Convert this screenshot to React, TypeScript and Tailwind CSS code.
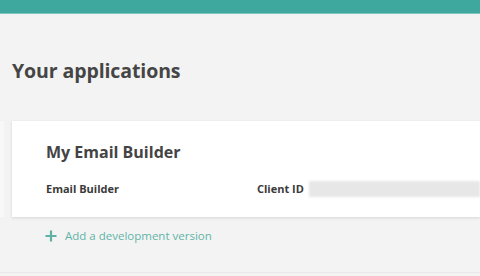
import React from 'react';

function PlusIcon() {
  return (
    <svg width="12" height="12" viewBox="0 0 12 12" className="shrink-0">
      <path d="M6 0.5v11M0.5 6h11" stroke="#5fb0a5" strokeWidth="2.2" />
    </svg>
  );
}

export default function App() {
  return (
    <div className="w-[480px] h-[276px] overflow-hidden bg-[#f3f3f3] font-['Open_Sans',sans-serif] flex flex-col">
      <div className="h-[14px] shrink-0 bg-[#3fa89e] border-b border-[#7cc6bd]" />
      <h1 className="mt-[44px] ml-[12px] text-[19.5px] leading-[26px] font-bold text-[#454545] tracking-[-0.1px]">
        Your applications
      </h1>
      <div className="flex mt-[37px]">
        <div className="w-[4px] h-[96px] bg-[#f8f8f8] shrink-0" />
        <div className="ml-[8px] flex-1 h-[96px] bg-white shadow-[0_1px_3px_rgba(0,0,0,0.12)] pl-[34px] pt-[20px] flex flex-col">
          <h2 className="text-[16px] leading-[22px] font-bold text-[#444]">My Email Builder</h2>
          <div className="mt-[18px] flex items-center text-[11px] font-bold text-[#3a3a3a]">
            <span className="w-[211px]">Email Builder</span>
            <span>Client ID</span>
            <span className="ml-[5px] h-[16px] flex-1 bg-[#e7e7e7] blur-[1px]" />
          </div>
        </div>
      </div>
      <div className="ml-[45px] mt-[10px] flex items-center gap-[8px] text-[11.5px] text-[#62b3a8]">
        <PlusIcon />
        <span>Add a development version</span>
      </div>
      <div className="mt-auto h-[4px] border-t border-[#e8e8e8]" />
    </div>
  );
}
